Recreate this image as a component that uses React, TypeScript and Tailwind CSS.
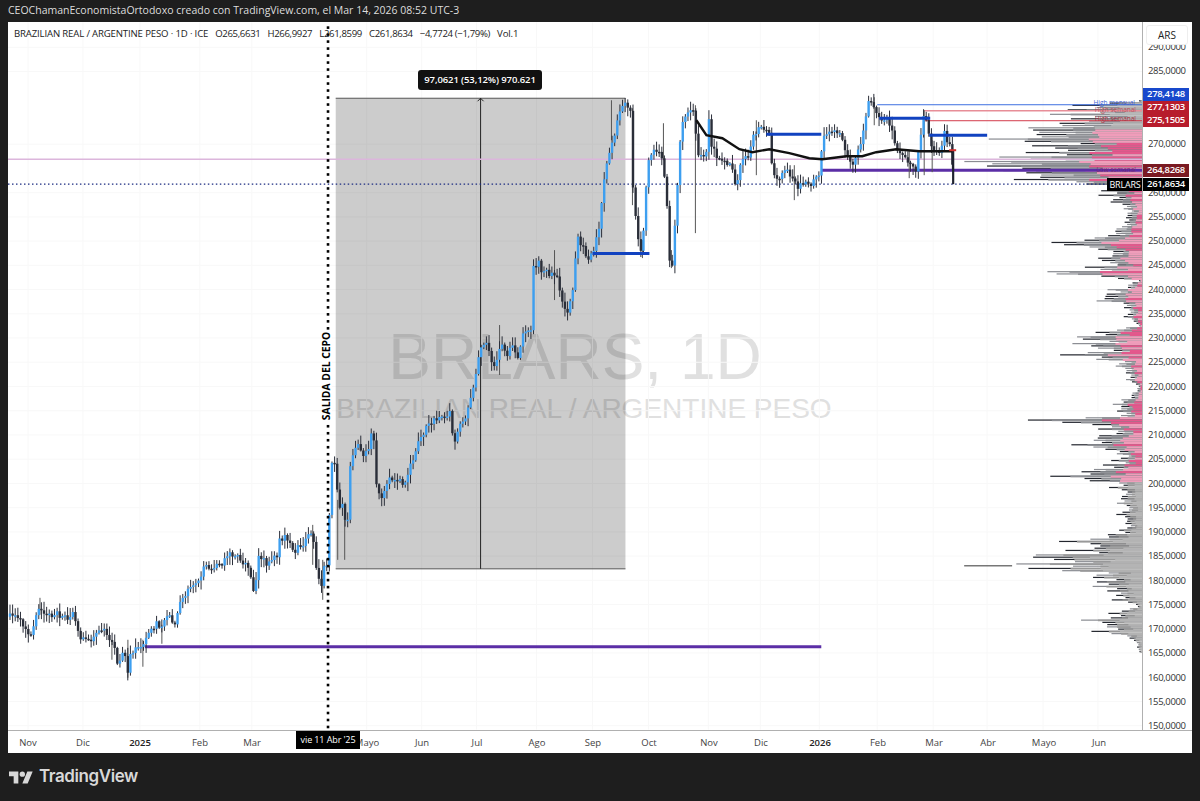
const closePath: [number, number][] = [
  [10, 617], [13, 615], [20, 615], [23, 623], [30, 640], [35, 617], [40, 608], [47, 615], [57, 615], [67, 617],
  [73, 613], [77, 630], [82, 640], [92, 643], [102, 627], [107, 637], [115, 645], [117, 665], [125, 653], [128, 672],
  [130, 652], [143, 647], [148, 633], [157, 623], [163, 628], [167, 615], [175, 623], [180, 600], [190, 590], [200, 578],
  [203, 567], [213, 570], [223, 563], [230, 552], [240, 557], [247, 568], [252, 580], [255, 595], [258, 557], [267, 563],
  [277, 558], [278, 542], [287, 537], [293, 553], [305, 543], [313, 530], [315, 563], [322, 587], [325, 560], [328, 568],
  [331, 465], [337, 467], [338, 507], [345, 507], [346, 550], [348, 523], [350, 470], [353, 453], [358, 443], [363, 453],
  [370, 450], [372, 432], [375, 440], [377, 488], [382, 495], [387, 482], [400, 477], [403, 485], [413, 462], [418, 442],
  [423, 437], [430, 422], [443, 418], [450, 413], [455, 447], [460, 422], [467, 417], [475, 378], [480, 353], [487, 340],
  [493, 367], [502, 345], [507, 355], [512, 340], [518, 358], [523, 337], [532, 330], [534, 267], [540, 260], [542, 273],
  [557, 273], [560, 290], [568, 313], [573, 290], [578, 237], [588, 258], [593, 253], [600, 225], [605, 173], [615, 137],
  [620, 110], [625, 105], [631, 110], [632, 170], [635, 198], [638, 237], [642, 253], [645, 217], [648, 160], [657, 150],
  [663, 157], [668, 207], [670, 257], [673, 263], [677, 207], [680, 143], [683, 123], [687, 113], [695, 113], [698, 153],
  [707, 153], [710, 115], [712, 147], [720, 160], [733, 168], [737, 190], [742, 160], [750, 157], [753, 133], [765, 128],
  [771, 133], [773, 173], [780, 177], [787, 167], [800, 190], [802, 182], [813, 185], [821, 170], [823, 135], [830, 133],
  [840, 133], [847, 150], [852, 167], [863, 137], [868, 105], [873, 100], [878, 117], [888, 120], [893, 133], [900, 153],
  [917, 170], [922, 133], [925, 113], [930, 137], [935, 153], [942, 153], [944, 127], [948, 140], [952, 150], [955, 183],
];

const maPath =
  "M697 120 L707 135 L723 138 L740 149 L753 152 L770 149 L790 153 L810 158 L823 159 L847 156 L863 156 L877 152 L897 149 L920 151 L953 151";

const extraWicks: [number, number, number][] = [
  [696, 105, 233], [128, 640, 678], [323, 560, 600], [345, 505, 560], [338, 500, 560], [664, 123, 160],
  [672, 250, 268], [633, 108, 205], [643, 240, 258], [40, 598, 615], [313, 525, 565], [875, 97, 125],
  [925, 110, 175], [933, 140, 172], [112, 640, 660], [143, 640, 667], [162, 625, 644], [612, 100, 140],
  [910, 150, 178], [795, 165, 200], [757, 120, 175], [500, 325, 375], [555, 250, 300],
];

const profilePeaks: [number, number][] = [
  [100, 3], [105, 77], [114, 93], [126, 110], [138, 155], [145, 110], [157, 145], [161, 180], [165, 156], [170, 138],
  [178, 141], [183, 56], [195, 43], [202, 30], [217, 16], [228, 25], [237, 45], [242, 93], [244, 78], [248, 45],
  [255, 28], [258, 47], [266, 53], [272, 103], [274, 75], [280, 3], [290, 38], [301, 46], [307, 18], [315, 20],
  [325, 3], [331, 43], [336, 66], [338, 58], [344, 72], [348, 40], [355, 87], [359, 43], [366, 25], [373, 15],
  [379, 16], [387, 3], [403, 30], [410, 23], [417, 50], [420, 127], [422, 73], [428, 44], [435, 42], [444, 72],
  [453, 25], [459, 29], [465, 40], [476, 93], [480, 53], [487, 33], [502, 25], [513, 26], [529, 21], [535, 36],
  [541, 83], [544, 41], [549, 70], [554, 103], [556, 116], [559, 88], [564, 130], [567, 130], [570, 81], [577, 49],
  [585, 53], [590, 35], [600, 30], [606, 3], [614, 38], [620, 62], [627, 33], [632, 55], [637, 13], [652, 2],
];

const priceTicks = [290, 285, 270, 260, 255, 250, 245, 240, 235, 230, 225, 220, 215, 210, 205, 200, 195, 190, 185, 180, 175, 170, 165, 160, 155, 150];

const timeTicks: [string, number, boolean][] = [
  ["Nov", 28, false], ["Dic", 83, false], ["2025", 140, true], ["Feb", 200, false], ["Mar", 252, false], ["Mayo", 367, false],
  ["Jun", 422, false], ["Jul", 477, false], ["Ago", 537, false], ["Sep", 593, false], ["Oct", 649, false], ["Nov", 709, false],
  ["Dic", 761, false], ["2026", 820, true], ["Feb", 878, false], ["Mar", 934, false], ["Abr", 988, false], ["Mayo", 1044, false],
  ["Jun", 1099, false],
];

const legendValues = ["O265,6631", "H266,9927", "L261,8599", "C261,8634"];

const priceY = (p: number) => 726 - (p - 150) * 4.85;

function makeRandom(seed: number) {
  let s = seed;
  return () => {
    s = (s * 16807) % 2147483647;
    return s / 2147483647;
  };
}

function interpolate(points: [number, number][], at: number) {
  for (let i = 1; i < points.length; i++) {
    const [x0, y0] = points[i - 1];
    const [x1, y1] = points[i];
    if (at <= x1) return y0 + ((y1 - y0) * (at - x0)) / (x1 - x0 || 1);
  }
  return points[points.length - 1][1];
}

function makeCandles() {
  const random = makeRandom(4242);
  const candles = [];
  let prev = 617;
  for (let x = 10; x <= 955; x += 2.62) {
    const close = interpolate(closePath, x) + (random() - 0.5) * 7;
    const top = Math.min(prev, close);
    const bottom = Math.max(prev, close);
    candles.push({
      x,
      up: close < prev,
      top,
      height: Math.max(bottom - top, 1.5),
      high: top - random() * 8 - 1,
      low: bottom + random() * 8 + 1,
    });
    prev = close;
  }
  return candles;
}

function makeProfile() {
  const random = makeRandom(991);
  const rows = [];
  for (let y = 100; y < 652; y += 2.25) {
    const near = profilePeaks.some(([py]) => Math.abs(py - y) < 1.2);
    const width = interpolate(profilePeaks, y) * (near ? 1 : 0.45 + random() * 0.45);
    rows.push({
      y,
      width,
      inner: width * (0.3 + random() * 0.2),
      mid: width * (0.6 + random() * 0.2),
      dark: random() > 0.4,
      shade: random() > 0.6,
    });
  }
  return rows;
}

const candles = makeCandles();
const profile = makeProfile();
const dots = Array.from({ length: 101 }, (_, i) => 26 + i * 7);

function Chart() {
  return (
    <svg viewBox="8 22 1135 708" className="absolute inset-0 h-full w-full">
      {timeTicks.map(([label, x]) => (
        <line key={label + x} x1={x} x2={x} y1={22} y2={730} stroke="#f8f8f8" />
      ))}
      {priceTicks.map((p) => (
        <line key={p} x1={8} x2={1143} y1={priceY(p)} y2={priceY(p)} stroke="#f8f8f8" />
      ))}

      <rect x={336} y={98} width={290} height={471} fill="#000" fillOpacity={0.2} />
      <line x1={336} x2={626} y1={98} y2={98} stroke="#555" />
      <line x1={336} x2={626} y1={569} y2={569} stroke="#555" />
      <line x1={481} x2={481} y1={98} y2={569} stroke="#222" />
      <path d="M478 101 L481 98 L484 101" fill="none" stroke="#222" />

      {profile.map((r) => (
        <g key={r.y}>
          <rect x={1143 - r.width} y={r.y} width={r.width} height={1.2} fill={r.dark ? "#23262e" : "#8a8c92"} />
          <rect x={1143 - r.mid} y={r.y} width={r.mid} height={1.7} fill={r.y > 482 ? "#999" : "#8d8f94"} />
          {r.y > 128 && r.y < 482 ? (
            <rect x={1143 - r.inner} y={r.y} width={r.inner} height={2.25} fill={r.shade ? "#e4588c" : "#ef9dba"} />
          ) : (
            <rect x={1143 - r.inner} y={r.y} width={r.inner} height={1.7} fill="#b4b4b4" />
          )}
        </g>
      ))}
      <line x1={965} x2={1013} y1={566} y2={566} stroke="#333" />

      <line x1={8} x2={1143} y1={159} y2={159} stroke="#dcb6dc" strokeWidth={1.4} />
      <line x1={878} x2={1143} y1={104.5} y2={104.5} stroke="#3d6fe0" />
      <line x1={925} x2={1143} y1={110.5} y2={110.5} stroke="#e78e98" strokeWidth={1.4} />
      <line x1={925} x2={1143} y1={120.5} y2={120.5} stroke="#d23a4a" />
      <line x1={822} x2={1143} y1={170} y2={170} stroke="#5b2ea6" strokeWidth={3} />
      <line x1={145} x2={822} y1={647} y2={647} stroke="#5b2ea6" strokeWidth={3} />
      <line x1={8} x2={1107} y1={184} y2={184} stroke="#1a2a80" strokeWidth={1.4} strokeDasharray="1.5 2.5" />

      {extraWicks.map(([x, y1, y2]) => (
        <line key={x + "-" + y1} x1={x} x2={x} y1={y1} y2={y2} stroke="#555" strokeWidth={1} />
      ))}
      {candles.map((c) => (
        <g key={c.x}>
          <line x1={c.x} x2={c.x} y1={c.high} y2={c.low} stroke="#2a2e39" strokeWidth={1} />
          <rect x={c.x - 1.2} y={c.top} width={2.4} height={c.height} fill={c.up ? "#3d9ff0" : "#2a2e39"} />
        </g>
      ))}
      <line x1={954} x2={954} y1={150} y2={184} stroke="#1f2330" strokeWidth={2.2} />

      <path d={maPath} fill="none" stroke="#111" strokeWidth={2.4} />
      <line x1={593} x2={650} y1={253.5} y2={253.5} stroke="#1142c0" strokeWidth={3} />
      <line x1={767} x2={822} y1={134} y2={134} stroke="#1142c0" strokeWidth={3} />
      <line x1={880} x2={931} y1={118} y2={118} stroke="#1142c0" strokeWidth={3} />
      <line x1={930} x2={988} y1={135} y2={135} stroke="#1142c0" strokeWidth={3} />
      <line x1={950} x2={957} y1={150} y2={150} stroke="#d32f2f" strokeWidth={2} />

      <g fontFamily="'Open Sans', sans-serif" fontSize={6.5} textAnchor="end">
        <text x={1136} y={105} fill="#3d5fd0">High mensual</text>
        <text x={1137} y={112} fill="#b8505c">High semanal</text>
        <text x={1137} y={121} fill="#a83040">High semanal</text>
        <text x={1137} y={172} fill="#7a2a70">Low semanal</text>
      </g>

      {dots.map((y) => (
        <rect key={y} x={327} y={y} width={2.6} height={2.6} fill="#000" />
      ))}
    </svg>
  );
}

function PriceTag({ bg, children }: { bg: string; children: string }) {
  return <div className={"flex h-[13px] items-center justify-center font-semibold text-white " + bg}>{children}</div>;
}

function PriceAxis() {
  return (
    <div className="relative w-[48px] text-[9.5px] tracking-[-0.35px] text-[#333]">
      {priceTicks.map((p) => (
        <span key={p} className="absolute left-[5px] leading-none" style={{ top: priceY(p) - 27 }}>
          {p},0000
        </span>
      ))}
      <div className="absolute left-[3px] top-[3px] flex h-[20px] w-[42px] items-center justify-center rounded-[3px] border border-[#eee] bg-white text-[10px] tracking-normal text-[#222]">
        ARS
      </div>
      <div className="absolute top-[66px] flex w-[46px] flex-col">
        <PriceTag bg="bg-[#1848cc]">278,4148</PriceTag>
        <PriceTag bg="bg-[#b71c2c]">277,1303</PriceTag>
        <PriceTag bg="bg-[#b71c2c]">275,1505</PriceTag>
      </div>
      <div className="absolute top-[142px] flex w-[46px] flex-col gap-px">
        <PriceTag bg="bg-[#7a1a22]">264,8268</PriceTag>
        <PriceTag bg="bg-black">261,8634</PriceTag>
      </div>
    </div>
  );
}

function TimeAxis() {
  return (
    <div className="relative h-[23px] border-t border-[#b0b0b0] text-[9.5px] text-[#444]">
      {timeTicks.map(([label, x, strong]) => (
        <span
          key={label + x}
          className={strong ? "absolute top-[5px] -translate-x-1/2 font-semibold text-[#222]" : "absolute top-[5px] -translate-x-1/2"}
          style={{ left: x - 8 }}
        >
          {label}
        </span>
      ))}
      <div className="absolute left-[288px] top-0 flex h-[18px] w-[64px] items-center justify-center bg-black text-[9px] tracking-[-0.1px] text-white">
        vie 11 Abr '25
      </div>
    </div>
  );
}

export default function App() {
  return (
    <div className="flex h-[801px] w-[1200px] flex-col overflow-hidden bg-[#1e1e1e] font-['Open_Sans',sans-serif]">
      <header className="flex h-[22px] items-center pl-[8px] text-[10.5px] text-[#ddd]">
        CEOChamanEconomistaOrtodoxo creado con TradingView.com, el Mar 14, 2026 08:52 UTC-3
      </header>

      <main className="mx-[8px] flex h-[731px] flex-col bg-white">
        <div className="flex h-[708px]">
          <div className="relative w-[1135px] overflow-hidden border-r border-[#b0b0b0]">
            <div className="absolute inset-0 flex flex-col items-center justify-center pb-[6px] font-['Liberation_Sans',sans-serif] text-[#e0e0e0]">
              <span className="text-[64px] leading-[72px]">BRLARS, 1D</span>
              <span className="ml-[18px] text-[28px] leading-[32px]">BRAZILIAN REAL / ARGENTINE PESO</span>
            </div>
            <Chart />
            <div className="absolute left-[6px] top-[5px] flex items-center gap-[7px] text-[9.6px] leading-[14px] text-[#222]">
              <span className="tracking-[-0.15px]">BRAZILIAN REAL / ARGENTINE PESO · 1D · ICE</span>
              {legendValues.map((v) => (
                <span key={v} className="tracking-[-0.35px]">{v}</span>
              ))}
              <span className="tracking-[-0.35px]">−4,7724 (−1,79%)</span>
              <span className="tracking-[-0.15px]">Vol.1</span>
            </div>
            <div className="absolute left-[410px] top-[48px] flex h-[20px] w-[124px] items-center justify-center rounded-[3px] bg-[#111] text-[9.5px] font-semibold tracking-[-0.1px] text-white">
              97,0621 (53,12%) 970.621
            </div>
            <div className="absolute left-[274px] top-[349px] flex h-[10px] w-[90px] -rotate-90 items-center justify-center bg-white text-[10.3px] font-bold text-black">
              SALIDA DEL CEPO
            </div>
            <div className="absolute left-[1099px] top-[156px] flex h-[13px] w-[36px] items-center justify-center bg-black text-[9px] tracking-[-0.2px] text-white">
              BRLARS
            </div>
          </div>
          <PriceAxis />
        </div>
        <TimeAxis />
      </main>

      <footer className="flex flex-1 items-center gap-[6px] pl-[9px] text-[#d8d8d8]">
        <svg viewBox="0 0 36 18" className="h-[13px] w-[24px] fill-current">
          <path d="M14 18H7V7H0V0h14v18zM28 18h-8L27.5 0h8L28 18z" />
          <circle cx="20" cy="4" r="4" />
        </svg>
        <span className="font-['Inter',sans-serif] text-[17px] font-semibold tracking-tight">TradingView</span>
      </footer>
    </div>
  );
}
